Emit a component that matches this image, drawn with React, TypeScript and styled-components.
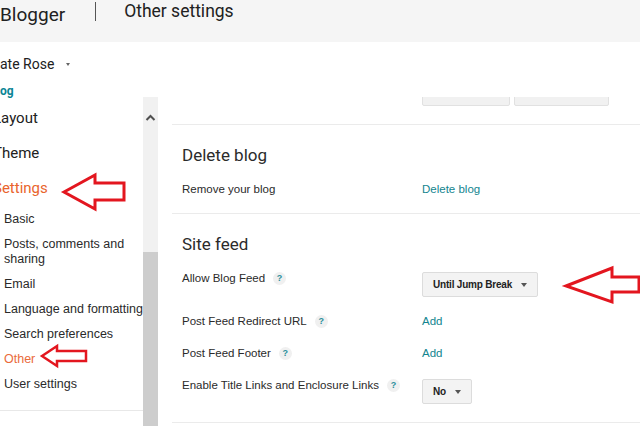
import React from "react"
import styled, { createGlobalStyle } from "styled-components"

const GlobalStyle = createGlobalStyle`
  html, body {
    margin: 0;
    padding: 0;
    background: #fff;
    overflow: hidden;
  }
  * {
    box-sizing: border-box;
  }
`

const Page = styled.div`
  position: relative;
  width: 640px;
  height: 426px;
  overflow: hidden;
  display: flex;
  flex-direction: column;
  font-family: "Liberation Sans", Arial, sans-serif;
  color: #222;
`
const Header = styled.header`
  height: 42px;
  flex: none;
  display: flex;
  align-items: flex-start;
  background: #f5f5f5;
`
const Brand = styled.div`
  font-family: Roboto, "Liberation Sans", sans-serif;
  font-size: 19px;
  line-height: 24px;
  margin-top: 3px;
  color: #212121;
`
const HeaderDivider = styled.div`
  width: 1px;
  height: 19px;
  margin: 2px 28px 0 30px;
  background: #555;
`
const PageTitle = styled.h1`
  margin: 0;
  font-family: Roboto, "Liberation Sans", sans-serif;
  font-size: 17.5px;
  font-weight: 400;
  line-height: 22px;
  color: #212121;
`
const BlogBar = styled.div`
  height: 55px;
  flex: none;
  padding-top: 13px;
`
const BlogName = styled.div`
  display: flex;
  align-items: center;
  font-family: Roboto, "Liberation Sans", sans-serif;
  font-size: 14px;
  line-height: 18px;
  color: #212121;
`
const Caret = styled.span<{ $half: number; $tall: number; $gap: number; $color: string }>`
  display: inline-block;
  width: 0;
  height: 0;
  margin-left: ${(p) => p.$gap}px;
  border-left: ${(p) => p.$half}px solid transparent;
  border-right: ${(p) => p.$half}px solid transparent;
  border-top: ${(p) => p.$tall}px solid ${(p) => p.$color};
`
const ViewBlog = styled.a`
  display: block;
  margin-top: 13px;
  font-family: Roboto, "Liberation Sans", sans-serif;
  font-weight: 700;
  font-size: 12px;
  line-height: 11px;
  color: #0b8595;
`
const Body = styled.div`
  flex: 1;
  min-height: 0;
  display: flex;
`
const Sidebar = styled.nav`
  width: 143px;
  flex: none;
  padding-top: 11px;
  display: flex;
  flex-direction: column;
`
const TopList = styled.div`
  display: flex;
  flex-direction: column;
  gap: 15px;
`
const TopItem = styled.a<{ $active?: boolean }>`
  margin-left: -7px;
  font-family: Roboto, "Liberation Sans", sans-serif;
  font-size: 15px;
  line-height: 20px;
  white-space: nowrap;
  color: ${(p) => (p.$active ? "#e9642d" : "#212121")};
`
const SubList = styled.div`
  margin-top: 9px;
  display: flex;
  flex-direction: column;
`
const SubItem = styled.a<{ $active?: boolean }>`
  padding: 5px 0 5px 4px;
  font-size: 12.5px;
  line-height: 15px;
  color: ${(p) => (p.$active ? "#ea6b3c" : "#2a2a2a")};
`
const SidebarRule = styled.div`
  margin-top: 13px;
  border-top: 1px solid #e8e8e8;
`
const Scrollbar = styled.div`
  width: 15px;
  flex: none;
  background: #f1f1f1;
  display: flex;
  flex-direction: column;
  align-items: center;
`
const ScrollUp = styled.svg`
  margin-top: 17px;
`
const ScrollThumb = styled.div`
  margin-top: auto;
  align-self: stretch;
  height: 174px;
  background: #cdcdcd;
`
const Main = styled.main`
  flex: 1;
  min-width: 0;
  overflow: hidden;
  padding-left: 14px;
`
const ButtonRow = styled.div`
  display: flex;
  gap: 4px;
  margin: -19px 0 0 250px;
`
const GhostButton = styled.div<{ $w: number }>`
  width: ${(p) => p.$w}px;
  height: 28px;
  background: #f1f1f1;
  border: 1px solid #e1e1e1;
  border-radius: 2px;
`
const Section = styled.section`
  border-top: 1px solid #ebebeb;
  padding: 18px 10px 16px;
  &:first-of-type {
    margin-top: 18px;
  }
  &:last-of-type {
    border-bottom: 1px solid #ebebeb;
    padding-bottom: 18px;
  }
`
const SectionTitle = styled.h2`
  margin: 0;
  font-family: Roboto, "Liberation Sans", sans-serif;
  font-size: 17px;
  font-weight: 400;
  line-height: 24px;
  color: #2b2b2b;
`
const Rows = styled.div`
  margin-top: 14px;
  display: flex;
  flex-direction: column;
  gap: 16px;
`
const Row = styled.div`
  display: grid;
  grid-template-columns: 240px 1fr;
  align-items: start;
`
const Label = styled.div`
  display: flex;
  align-items: flex-start;
  font-size: 11.5px;
  line-height: 16px;
  color: #2a2a2a;
`
const Help = styled.span`
  width: 13px;
  height: 13px;
  margin: 2px 0 0 8px;
  border-radius: 50%;
  background: #f0f0f0;
  color: #2b8f9c;
  font-size: 9px;
  font-weight: 700;
  line-height: 13px;
  text-align: center;
`
const TextLink = styled.a`
  font-size: 11.5px;
  line-height: 16px;
  color: #12858f;
`
const Select = styled.div`
  justify-self: start;
  display: inline-flex;
  align-items: center;
  height: 25px;
  margin-top: 2px;
  padding: 0 10px;
  background: #f3f3f3;
  border: 1px solid #dcdcdc;
  border-radius: 2px;
  font-size: 10px;
  font-weight: 700;
  letter-spacing: -0.2px;
  color: #222;
`
const Annotations = styled.svg`
  position: absolute;
  left: 0;
  top: 0;
  pointer-events: none;
`

interface Setting {
  label: string
  help?: boolean
  link?: string
  select?: string
}

const siteFeed: Setting[] = [
  { label: "Allow Blog Feed", help: true, select: "Until Jump Break" },
  { label: "Post Feed Redirect URL", help: true, link: "Add" },
  { label: "Post Feed Footer", help: true, link: "Add" },
  { label: "Enable Title Links and Enclosure Links", help: true, select: "No" },
]

const subNav = [
  "Basic",
  "Posts, comments and sharing",
  "Email",
  "Language and formatting",
  "Search preferences",
  "Other",
  "User settings",
]

const SettingRow = ({ setting }: { setting: Setting }) => (
  <Row>
    <Label>
      {setting.label}
      {setting.help && <Help>?</Help>}
    </Label>
    {setting.link && <TextLink>{setting.link}</TextLink>}
    {setting.select && (
      <Select>
        {setting.select}
        <Caret $half={3.5} $tall={4} $gap={9} $color="#555" />
      </Select>
    )}
  </Row>
)

const App = () => {
  return (
    <Page>
      <GlobalStyle />
      <Header>
        <Brand>Blogger</Brand>
        <HeaderDivider />
        <PageTitle>Other settings</PageTitle>
      </Header>
      <BlogBar>
        <BlogName>
          ate Rose
          <Caret $half={2.5} $tall={3} $gap={12} $color="#666" />
        </BlogName>
        <ViewBlog>og</ViewBlog>
      </BlogBar>
      <Body>
        <Sidebar>
          <TopList>
            <TopItem>Layout</TopItem>
            <TopItem>Theme</TopItem>
            <TopItem $active>Settings</TopItem>
          </TopList>
          <SubList>
            {subNav.map((item) => (
              <SubItem key={item} $active={item === "Other"}>
                {item}
              </SubItem>
            ))}
          </SubList>
          <SidebarRule />
        </Sidebar>
        <Scrollbar>
          <ScrollUp width="11" height="7" viewBox="0 0 11 7">
            <polyline points="1.5,6 5.5,2 9.5,6" fill="none" stroke="#505050" strokeWidth="2" />
          </ScrollUp>
          <ScrollThumb />
        </Scrollbar>
        <Main>
          <ButtonRow>
            <GhostButton $w={88} />
            <GhostButton $w={95} />
          </ButtonRow>
          <Section>
            <SectionTitle>Delete blog</SectionTitle>
            <Rows>
              <Row>
                <Label>Remove your blog</Label>
                <TextLink>Delete blog</TextLink>
              </Row>
            </Rows>
          </Section>
          <Section>
            <SectionTitle>Site feed</SectionTitle>
            <Rows>
              {siteFeed.map((s) => (
                <SettingRow key={s.label} setting={s} />
              ))}
            </Rows>
          </Section>
        </Main>
      </Body>
      <Annotations width="640" height="426" viewBox="0 0 640 426">
        <g fill="none" stroke="#e3161f" strokeWidth="3" strokeLinejoin="miter">
          <polygon points="64,192 95,175 95,183 124,183 124,200 95,200 95,209" />
          <polygon points="42,356 57,346 57,351 86,351 86,361 57,361 57,366" strokeWidth="2.5" />
          <polygon points="566,286 612,268 612,277 639,277 639,292 612,292 612,302" />
        </g>
      </Annotations>
    </Page>
  )
}

export default App
